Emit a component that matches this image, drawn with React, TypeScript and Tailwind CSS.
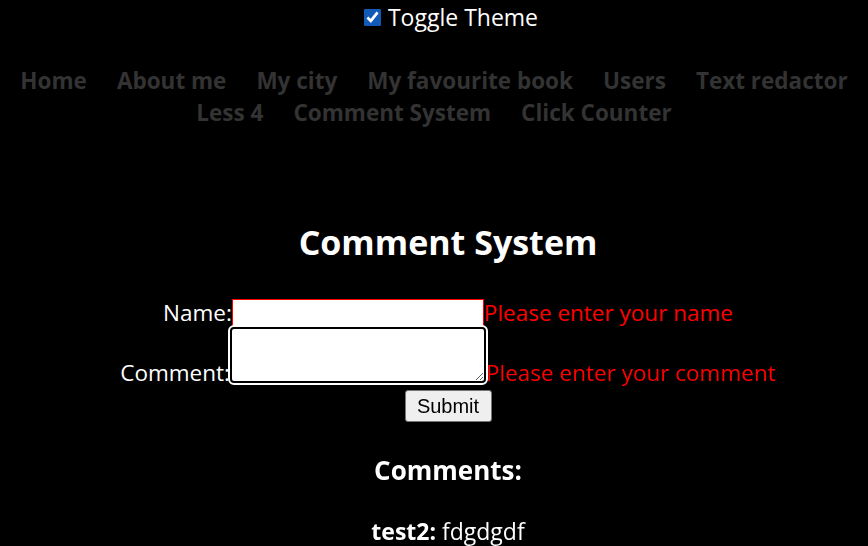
import { useState } from "react";

const links = [
  "Home",
  "About me",
  "My city",
  "My favourite book",
  "Users",
  "Text redactor",
  "Less 4",
  "Comment System",
  "Click Counter",
];

export default function App() {
  const [dark, setDark] = useState(true);

  return (
    <div
      className="min-h-[546px] bg-black text-white text-center"
      style={{ fontFamily: "'Open Sans', 'Noto Sans', sans-serif" }}
    >
      {/* Theme toggle */}
      <label className="flex items-center justify-center gap-[7px] pt-[2px] pl-[34px] text-[23px] leading-[30px]">
        <input
          type="checkbox"
          checked={dark}
          onChange={() => setDark(!dark)}
          className="w-[17px] h-[17px] accent-[#1a73e8]"
        />
        Toggle Theme
      </label>

      {/* Nav */}
      <nav className="flex flex-wrap justify-center mt-[33px] text-[22.5px] font-bold leading-[32px]">
        {links.map((l) => (
          <a key={l} href="#" className="px-[15px] text-[#333]">
            {l}
          </a>
        ))}
      </nav>

      <main className="pl-[28px]">
        <h1 className="mt-[92px] text-[34px] font-bold leading-[42px]">
          Comment System
        </h1>

        {/* Form */}
        <form className="mt-[36px] text-[22.5px]">
          <div className="flex items-end justify-center">
            <span className="leading-[28px]">Name:</span>
            <input
              type="text"
              className="w-[252px] h-[28px] bg-white border border-[#f00] text-black"
            />
            <span className="leading-[28px] text-[#f00]">Please enter your name</span>
          </div>
          <div className="flex items-end justify-center">
            <span className="leading-[20px]">Comment:</span>
            <textarea
              autoFocus
              className="w-[256px] h-[56px] bg-white border-2 border-black rounded-[4px] outline-2 outline-white text-black resize-y"
            />
            <span className="leading-[20px] text-[#f00]">Please enter your comment</span>
          </div>
          <button
            type="button"
            className="mt-[7px] w-[87px] h-[32px] bg-[#efefef] border border-[#767676] rounded-[3px] text-black text-[20px] leading-none"
            style={{ fontFamily: "'Liberation Sans', Arial, sans-serif" }}
          >
            Submit
          </button>
        </form>

        <h3 className="mt-[31px] text-[26px] font-bold leading-[34px]">Comments:</h3>
        <p className="mt-[28px] text-[23px] leading-[32px]">
          <b>test2:</b> fdgdgdf
        </p>
      </main>
    </div>
  );
}
